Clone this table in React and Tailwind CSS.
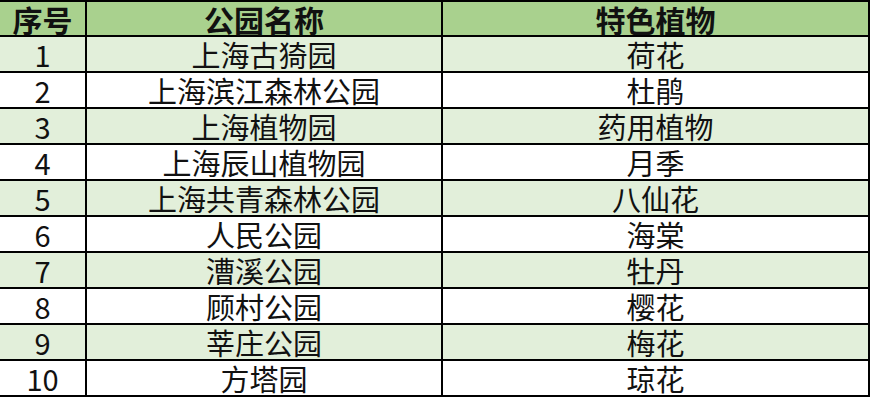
import React from "react";

const rows = [
  ["1", "上海古猗园", "荷花"],
  ["2", "上海滨江森林公园", "杜鹃"],
  ["3", "上海植物园", "药用植物"],
  ["4", "上海辰山植物园", "月季"],
  ["5", "上海共青森林公园", "八仙花"],
  ["6", "人民公园", "海棠"],
  ["7", "漕溪公园", "牡丹"],
  ["8", "顾村公园", "樱花"],
  ["9", "莘庄公园", "梅花"],
  ["10", "方塔园", "琼花"],
];

const font = { fontFamily: '"Noto Sans CJK SC", "Noto Sans", sans-serif' };

export default function App() {
  return (
    <div className="w-[874px] h-[400px] bg-white" style={font}>
      <div className="w-[870px] border-t-2 border-r-2 border-black text-[#111]">
        <div className="flex h-[35px] border-b-2 border-black bg-[#a9d18e] font-bold text-[30px] leading-none">
          <div className="w-[87px] border-r-2 border-black flex items-center justify-center">序号</div>
          <div className="w-[356px] border-r-2 border-black flex items-center justify-center">公园名称</div>
          <div className="flex-1 flex items-center justify-center">特色植物</div>
        </div>
        {rows.map((r, i) => (
          <div
            key={r[0]}
            className={`flex h-[36px] border-b-2 border-black text-[29px] leading-none ${i % 2 === 0 ? "bg-[#e2efda]" : "bg-white"}`}
          >
            <div className="w-[87px] border-r-2 border-black flex items-center justify-center">{r[0]}</div>
            <div className="w-[356px] border-r-2 border-black flex items-center justify-center">{r[1]}</div>
            <div className="flex-1 flex items-center justify-center">{r[2]}</div>
          </div>
        ))}
      </div>
    </div>
  );
}
